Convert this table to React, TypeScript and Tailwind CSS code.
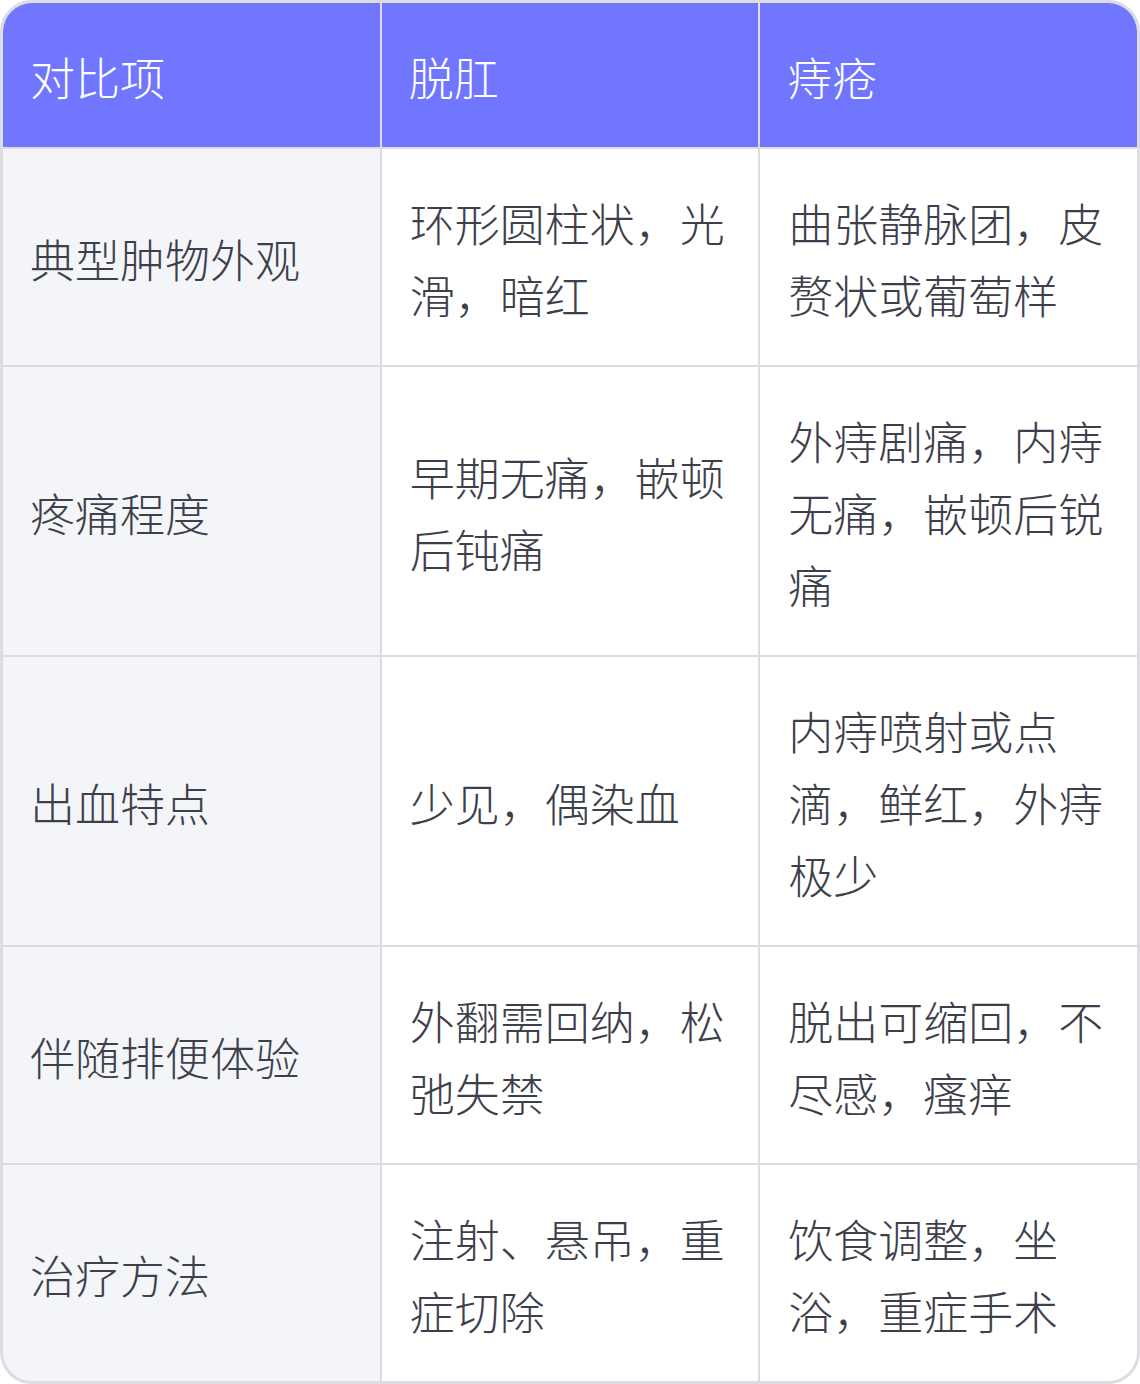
const headers = ['对比项', '脱肛', '痔疮'];

const rows: string[][] = [
  ['典型肿物外观', '环形圆柱状，光滑，暗红', '曲张静脉团，皮赘状或葡萄样'],
  ['疼痛程度', '早期无痛，嵌顿后钝痛', '外痔剧痛，内痔无痛，嵌顿后锐痛'],
  ['出血特点', '少见，偶染血', '内痔喷射或点滴，鲜红，外痔极少'],
  ['伴随排便体验', '外翻需回纳，松弛失禁', '脱出可缩回，不尽感，瘙痒'],
  ['治疗方法', '注射、悬吊，重症切除', '饮食调整，坐浴，重症手术'],
];

const App = () => {
  return (
    <div
      className="w-[1140px] h-[1384px] bg-white"
      style={{ fontFamily: '"Noto Sans CJK SC", "Noto Sans", sans-serif' }}
    >
      <div className="border-[3px] border-[#dcdce1] rounded-[32px] overflow-hidden">
        <div className="grid grid-cols-3 gap-[2px] bg-[#dcdce1] text-[45px] leading-[72px] font-light">
          {headers.map((h) => (
            <div key={h} className="bg-[#7176ff] text-white px-[27px] pt-[38px] pb-[34px]">
              {h}
            </div>
          ))}
          {rows.map((row) =>
            row.map((cell, i) => (
              <div
                key={row[0] + i}
                className={
                  i === 0
                    ? 'bg-[#f4f5f9] text-[#3d404b] px-[27px] pt-[38px] pb-[34px] flex items-center'
                    : 'bg-white text-[#3d404b] px-[28px] pt-[38px] pb-[34px] flex items-center'
                }
              >
                <span>{cell}</span>
              </div>
            ))
          )}
        </div>
      </div>
    </div>
  );
};

export default App;
